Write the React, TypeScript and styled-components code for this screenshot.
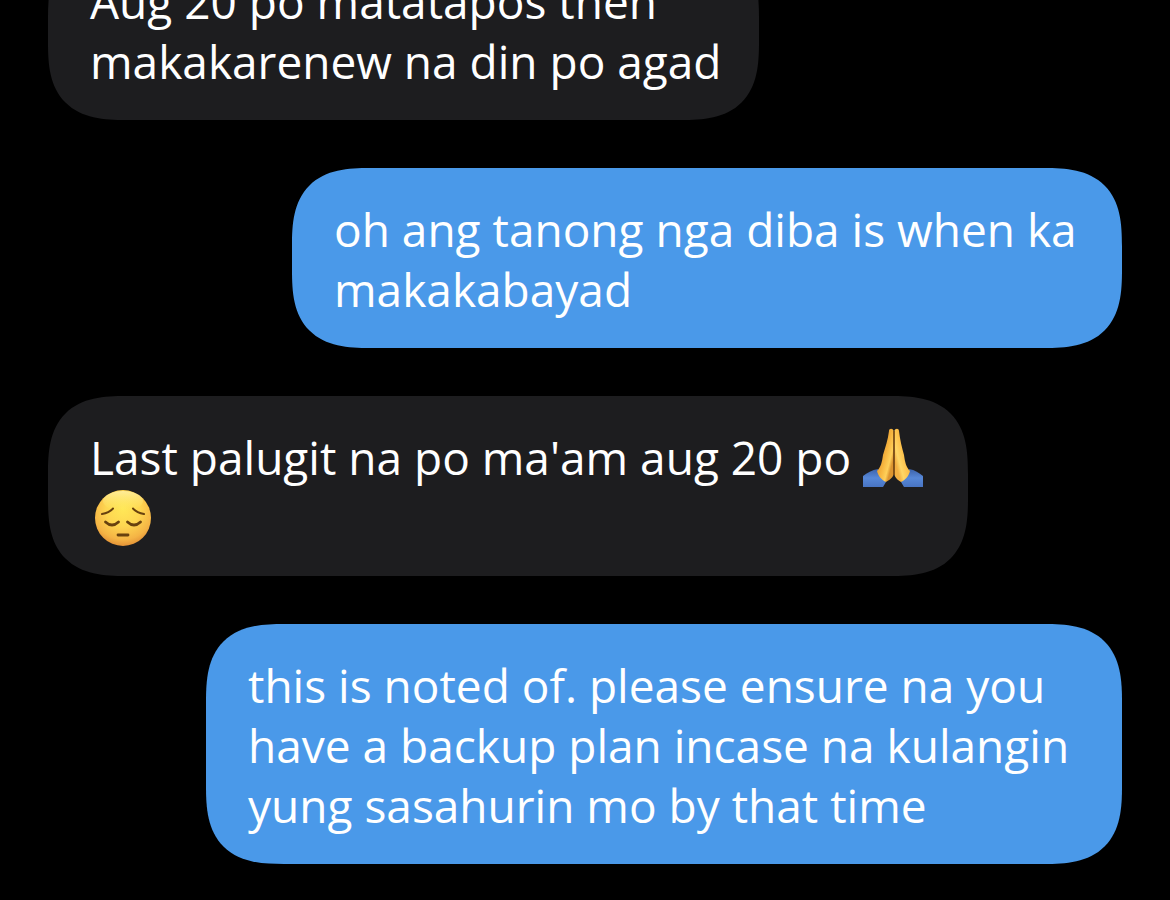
import React from "react";
import styled, { createGlobalStyle } from "styled-components";

const GlobalStyle = createGlobalStyle`
  * { box-sizing: border-box; }
  html, body { margin: 0; background: #000; }
`;

const Thread = styled.main`
  height: 100vh;
  padding: 0 48px 36px;
  display: flex;
  flex-direction: column;
  justify-content: flex-end;
  gap: 48px;
  overflow: hidden;
  background: #000;
  color: #fff;
  font-family: "Open Sans", "Noto Sans", sans-serif;
  font-size: 46px;
  line-height: 60px;
`;

const Bubble = styled.article<{ $mine?: boolean; $width: number }>`
  flex: none;
  align-self: ${(p) => (p.$mine ? "flex-end" : "flex-start")};
  width: ${(p) => p.$width}px;
  max-width: 100%;
  padding: 31px 42px 29px;
  background: ${(p) => (p.$mine ? "#4a99e9" : "#1d1d1f")};
  border-radius: 60px;

  @supports (corner-shape: superellipse(1.45)) {
    border-radius: 78px;
    corner-shape: superellipse(1.45);
  }
`;

const Text = styled.p`
  margin: 0;
  white-space: pre;
`;

const Emoji = styled.svg`
  display: inline-block;
  width: 60px;
  height: 60px;
  vertical-align: top;
`;

const FaceEmoji = styled(Emoji)`
  margin-left: 3px;
`;

function FoldedHands() {
  return (
    <Emoji viewBox="0 0 60 60" role="img" aria-label="folded hands">
      <defs>
        <linearGradient id="handL" gradientUnits="userSpaceOnUse" x1="16" y1="26" x2="31" y2="30">
          <stop offset="0" stopColor="#e2952f" />
          <stop offset="0.45" stopColor="#f6b53f" />
          <stop offset="0.8" stopColor="#ffd05a" />
          <stop offset="1" stopColor="#dc9430" />
        </linearGradient>
        <linearGradient id="handR" gradientUnits="userSpaceOnUse" x1="31" y1="30" x2="46" y2="26">
          <stop offset="0" stopColor="#f3b043" />
          <stop offset="0.25" stopColor="#ffd767" />
          <stop offset="0.65" stopColor="#fdc04a" />
          <stop offset="1" stopColor="#e2952f" />
        </linearGradient>
        <linearGradient id="sleeve" x1="0" y1="0" x2="0" y2="1">
          <stop offset="0" stopColor="#3c62aa" />
          <stop offset="0.5" stopColor="#5788d8" />
          <stop offset="1" stopColor="#4874c2" />
        </linearGradient>
      </defs>
      <path d="M0 49C4 46 9 43 15 42L23 55L20 60H0Z" fill="url(#sleeve)" />
      <path d="M60 49C56 46 52 43 46 42L38 55L41 60H60Z" fill="url(#sleeve)" />
      <path d="M26 4C26 1 30 1 30.600 4V47C30 51 26 53 23 55C19 53 15 49 14 44C18 40 19 35 20 28C22 21 25 13 26 4Z" fill="url(#handL)" />
      <path d="M36 4C36 1 32 1 31.400 4V47C32 51 35 53 38 55C42 53 46 49 47 44C43 40 42 35 41 28C39 21 37 13 36 4Z" fill="url(#handR)" />
      <path d="M31 4V48" stroke="#7a470f" strokeWidth="1.4" />
    </Emoji>
  );
}

function PensiveFace() {
  return (
    <FaceEmoji viewBox="0 0 60 60" role="img" aria-label="pensive face">
      <defs>
        <radialGradient id="skin" cx="0.5" cy="0.34" r="0.68">
          <stop offset="0" stopColor="#ffe757" />
          <stop offset="0.45" stopColor="#fed651" />
          <stop offset="0.8" stopColor="#f5b445" />
          <stop offset="1" stopColor="#e08c34" />
        </radialGradient>
        <linearGradient id="shine" x1="0" y1="0" x2="0" y2="1">
          <stop offset="0" stopColor="#fff6b8" stopOpacity="0.7" />
          <stop offset="1" stopColor="#fff36a" stopOpacity="0" />
        </linearGradient>
      </defs>
      <circle cx="30" cy="31" r="28" fill="url(#skin)" />
      <ellipse cx="30" cy="14" rx="20" ry="10" fill="url(#shine)" />
      <g fill="none" stroke="#68410f" strokeWidth="2" strokeLinecap="round">
        <path d="M9 27Q16 26 20 21.500" />
        <path d="M51 27Q44 26 40 21.500" />
        <path d="M12.500 35Q19 41 25.500 35" strokeWidth="2.8" />
        <path d="M34.500 35Q41 41 47.500 35" strokeWidth="2.8" />
        <path d="M25 48H35" strokeWidth="2.8" />
      </g>
    </FaceEmoji>
  );
}

export default function App() {
  return (
    <>
      <GlobalStyle />
      <Thread>
        <Bubble $width={711}>
          <Text>{"Aug 20 po matatapos then\nmakakarenew na din po agad"}</Text>
        </Bubble>
        <Bubble $mine $width={830}>
          <Text>{"oh ang tanong nga diba is when ka\nmakakabayad"}</Text>
        </Bubble>
        <Bubble $width={920}>
          <Text>
            {"Last palugit na po ma'am aug 20 po "}
            <FoldedHands />
            {"\n"}
            <PensiveFace />
          </Text>
        </Bubble>
        <Bubble $mine $width={916}>
          <Text>
            {"this is noted of. please ensure na you\nhave a backup plan incase na kulangin\nyung sasahurin mo by that time"}
          </Text>
        </Bubble>
      </Thread>
    </>
  );
}
